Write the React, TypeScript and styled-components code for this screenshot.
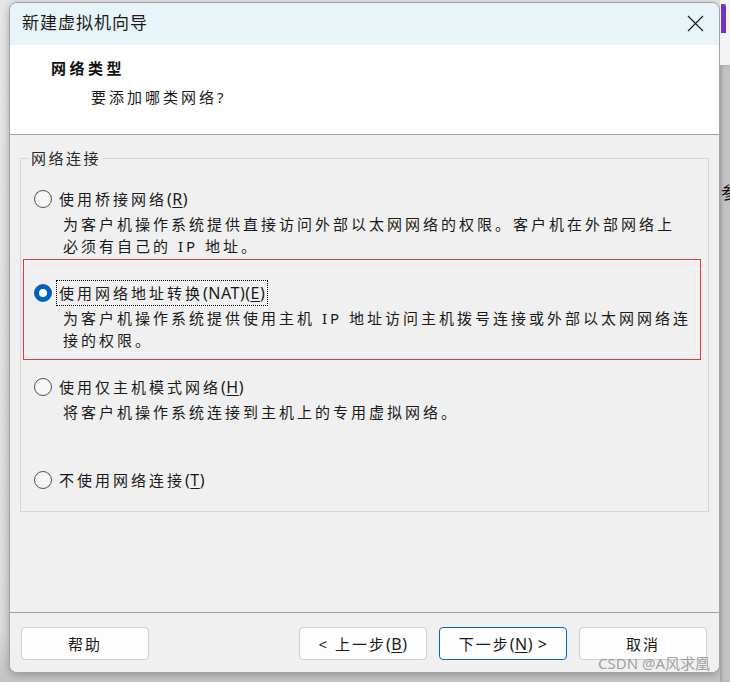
import React from "react";
import styled, { createGlobalStyle, css } from "styled-components";

const GlobalStyle = createGlobalStyle`
  html, body {
    margin: 0;
    padding: 0;
    width: 730px;
    height: 682px;
    overflow: hidden;
    background: #e2e2e2;
  }
  * { box-sizing: border-box; }
`;

const FONT = `"Noto Sans", "Noto Sans CJK SC", sans-serif`;

const Page = styled.div`
  width: 730px;
  height: 682px;
  display: flex;
  align-items: flex-start;
  position: relative;
  overflow: hidden;
  background: linear-gradient(to bottom, #e6e6e6 0%, #dcdcdc 92%, #c4c4c4 100%);
  font-family: ${FONT};
`;

const Window = styled.div`
  margin: 2px 0 0 9px;
  width: 711px;
  height: 671px;
  flex: none;
  border: 1px solid #a3a3a3;
  border-radius: 8px;
  overflow: hidden;
  display: flex;
  flex-direction: column;
  background: #f0f0f0;
  box-shadow: 0 2px 8px rgba(0, 0, 0, 0.28);
`;

const TitleBar = styled.div`
  height: 42px;
  flex: none;
  background: #e8f4f8;
  display: flex;
  align-items: center;
  justify-content: space-between;
  padding: 0 15px 2px 12px;
`;

const Title = styled.div`
  font-size: 17px;
  letter-spacing: 1px;
  line-height: 24px;
  color: #1a1a1a;
`;

const CloseIcon = styled.svg`
  width: 17px;
  height: 17px;
  display: block;
`;

const Header = styled.div`
  height: 90px;
  flex: none;
  background: #ffffff;
  border-bottom: 1px solid #a0a0a0;
  padding: 11px 0 0 41px;
`;

const Heading = styled.div`
  font-size: 15px;
  font-weight: 700;
  letter-spacing: 3.5px;
  line-height: 24px;
  color: #111;
`;

const SubHeading = styled.div`
  margin: 5px 0 0 40px;
  font-size: 15px;
  letter-spacing: 3px;
  line-height: 24px;
  color: #1a1a1a;
`;

const Body = styled.div`
  flex: 1;
  padding-top: 12px;
  background: #f0f0f0;
`;

const Group = styled.fieldset`
  margin: 0 10px;
  padding: 0;
  min-width: 0;
  border: 1px solid #d6d6d6;
`;

const GroupLegend = styled.legend`
  margin-left: 8px;
  padding: 0 2px;
  font-size: 15px;
  letter-spacing: 2.5px;
  line-height: 22px;
  color: #2a2a2a;
`;

const Option = styled.div<{ $pt: number; $pb: number; $highlight?: boolean }>`
  margin: 0 7px 0 2px;
  padding: ${(p) => p.$pt}px 0 ${(p) => p.$pb}px 11px;
  ${(p) =>
    p.$highlight &&
    css`
      border: 1px solid #e8383d;
      padding-left: 10px;
    `}
`;

const OptionRow = styled.div`
  display: flex;
  align-items: center;
  gap: 5px;
  height: 24px;
`;

const Radio = styled.span<{ $checked?: boolean }>`
  width: 18px;
  height: 18px;
  flex: none;
  border-radius: 50%;
  ${(p) =>
    p.$checked
      ? css`
          background: #ffffff;
          border: 5px solid #0064bd;
        `
      : css`
          background: #f6f6f6;
          border: 1px solid #505050;
        `}
`;

const OptionLabel = styled.span<{ $focused?: boolean }>`
  padding: 0 2px;
  height: 24px;
  line-height: 24px;
  font-size: 15px;
  letter-spacing: 3px;
  color: #1a1a1a;
  white-space: nowrap;
  outline: ${(p) => (p.$focused ? "1px dotted #000" : "none")};
`;

const Latin = styled.span`
  font-size: 16px;
  letter-spacing: 0.5px;
`;

const Mnemonic = styled.u`
  text-decoration: underline;
  text-underline-offset: 2px;
  text-decoration-thickness: 1px;
`;

const Description = styled.div`
  margin: 2px 0 0 29px;
  font-size: 15px;
  letter-spacing: 3px;
  line-height: 22px;
  color: #1a1a1a;
  white-space: nowrap;
`;

const Footer = styled.div`
  height: 60px;
  flex: none;
  border-top: 1px solid #a0a0a0;
  background: #f0f0f0;
  display: flex;
  align-items: flex-start;
  gap: 12px;
  padding: 14px 12px 0 11px;
`;

const Spacer = styled.div`
  flex: 1;
`;

const Button = styled.button<{ $primary?: boolean }>`
  width: 128px;
  height: 33px;
  flex: none;
  padding: 0;
  background: #fdfdfd;
  border: 1px solid ${(p) => (p.$primary ? "#0067c0" : "#d0d0d0")};
  border-radius: 4px;
  font-family: ${FONT};
  font-size: 15px;
  letter-spacing: 2px;
  color: #1a1a1a;
  display: flex;
  align-items: center;
  justify-content: center;
`;

const RightStrip = styled.div`
  width: 10px;
  height: 682px;
  flex: none;
  display: flex;
  flex-direction: column;
  overflow: hidden;
`;

const StripTop = styled.div`
  height: 65px;
  flex: none;
  background: #f4f4f4;
  padding: 4px 0 0 1px;
`;

const PurpleMark = styled.div`
  width: 5px;
  height: 29px;
  background: #7b30c0;
  border-top-right-radius: 2px;
`;

const StripBottom = styled.div`
  flex: 1;
  background: #c3c3c3;
  box-shadow: inset 2px 0 3px rgba(0, 0, 0, 0.18);
  padding-top: 118px;
  padding-left: 1px;
`;

const StripGlyph = styled.div`
  font-size: 17px;
  line-height: 20px;
  color: #111;
  white-space: nowrap;
`;

const Watermark = styled.div`
  position: absolute;
  left: 598px;
  top: 654px;
  font-size: 15px;
  line-height: 18px;
  color: rgba(140, 140, 140, 0.8);
  white-space: nowrap;
  pointer-events: none;
`;

export default function App() {
  return (
    <>
      <GlobalStyle />
      <Page>
        <Window>
          <TitleBar>
            <Title>新建虚拟机向导</Title>
            <CloseIcon viewBox="0 0 17 17">
              <path d="M1 1 L16 16 M16 1 L1 16" stroke="#1f1f1f" strokeWidth="1.2" fill="none" />
            </CloseIcon>
          </TitleBar>
          <Header>
            <Heading>网络类型</Heading>
            <SubHeading>要添加哪类网络?</SubHeading>
          </Header>
          <Body>
            <Group>
              <GroupLegend>网络连接</GroupLegend>
              <Option $pt={18} $pb={2}>
                <OptionRow>
                  <Radio />
                  <OptionLabel>
                    使用桥接网络<Latin>(<Mnemonic>R</Mnemonic>)</Latin>
                  </OptionLabel>
                </OptionRow>
                <Description>
                  为客户机操作系统提供直接访问外部以太网网络的权限。客户机在外部网络上
                  <br />
                  必须有自己的 IP 地址。
                </Description>
              </Option>
              <Option $pt={21} $pb={8} $highlight>
                <OptionRow>
                  <Radio $checked />
                  <OptionLabel $focused>
                    使用网络地址转换<Latin>(NAT)(<Mnemonic>E</Mnemonic>)</Latin>
                  </OptionLabel>
                </OptionRow>
                <Description>
                  为客户机操作系统提供使用主机 IP 地址访问主机拨号连接或外部以太网网络连
                  <br />
                  接的权限。
                </Description>
              </Option>
              <Option $pt={15} $pb={0}>
                <OptionRow>
                  <Radio />
                  <OptionLabel>
                    使用仅主机模式网络<Latin>(<Mnemonic>H</Mnemonic>)</Latin>
                  </OptionLabel>
                </OptionRow>
                <Description>将客户机操作系统连接到主机上的专用虚拟网络。</Description>
              </Option>
              <Option $pt={45} $pb={19}>
                <OptionRow>
                  <Radio />
                  <OptionLabel>
                    不使用网络连接<Latin>(<Mnemonic>T</Mnemonic>)</Latin>
                  </OptionLabel>
                </OptionRow>
              </Option>
            </Group>
          </Body>
          <Footer>
            <Button>帮助</Button>
            <Spacer />
            <Button>
              &lt; 上一步<Latin>(<Mnemonic>B</Mnemonic>)</Latin>
            </Button>
            <Button $primary>
              下一步<Latin>(<Mnemonic>N</Mnemonic>) &gt;</Latin>
            </Button>
            <Button>取消</Button>
          </Footer>
        </Window>
        <RightStrip>
          <StripTop>
            <PurpleMark />
          </StripTop>
          <StripBottom>
            <StripGlyph>参</StripGlyph>
          </StripBottom>
        </RightStrip>
        <Watermark>CSDN @A风求凰</Watermark>
      </Page>
    </>
  );
}
